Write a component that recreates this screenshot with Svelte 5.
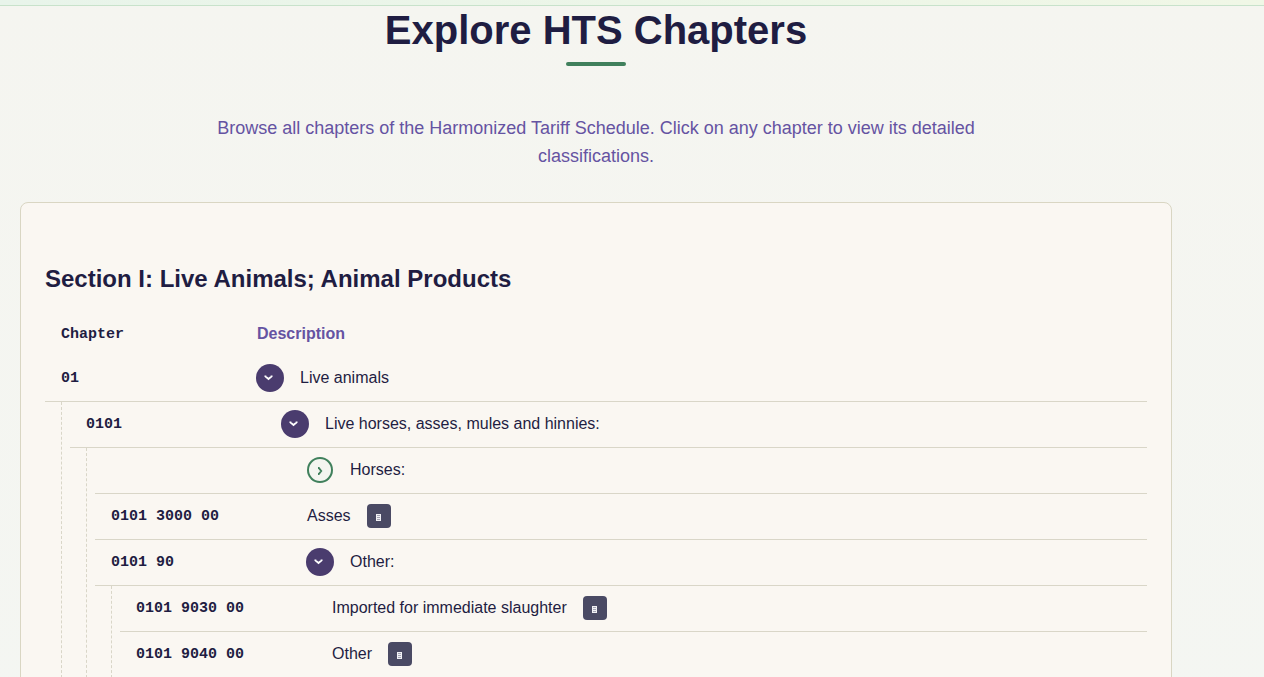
<script lang="ts">
  interface Entry {
    code: string;
    text: string;
    expandable?: boolean;
    open?: boolean;
    children?: Entry[];
  }

  let entries: Entry[] = $state([
    {
      code: "01",
      text: "Live animals",
      expandable: true,
      open: true,
      children: [
        {
          code: "0101",
          text: "Live horses, asses, mules and hinnies:",
          expandable: true,
          open: true,
          children: [
            { code: "", text: "Horses:", expandable: true, open: false },
            { code: "0101 3000 00", text: "Asses" },
            {
              code: "0101 90",
              text: "Other:",
              expandable: true,
              open: true,
              children: [
                { code: "0101 9030 00", text: "Imported for immediate slaughter" },
                { code: "0101 9040 00", text: "Other" },
              ],
            },
          ],
        },
      ],
    },
  ]);
</script>

{#snippet branch(items: Entry[])}
  <ul>
    {#each items as item}
      <li>
        <div class="row">
          <span class="code">{item.code}</span>
          <div class="description">
            {#if item.expandable}
              <button
                class="toggle"
                class:open={item.open}
                aria-expanded={item.open}
                aria-label="Toggle {item.text}"
                onclick={() => (item.open = !item.open)}
              >
                <svg width="26" height="26" viewBox="0 0 26 26" fill="none" stroke="currentColor">
                  {#if item.open}
                    <path d="M8.4 10.4 V11.4 L11.5 14 L14.6 11.4 V10.4" stroke-width="1.9" />
                  {:else}
                    <path d="M11 11 H11.8 L14.2 14 L11.8 17 H11" stroke-width="1.9" />
                  {/if}
                </svg>
              </button>
            {/if}
            <span>{item.text}</span>
            {#if !item.expandable}
              <button class="details" aria-label="Details for {item.code}">
                <svg width="24" height="24" viewBox="0 0 24 24">
                  <rect x="9" y="10" width="5" height="7" fill="#f1f1f5" />
                  <path d="M10 11.5h3M10 13.5h3M10 15.5h3" stroke="#a4a4b4" stroke-width="1" />
                </svg>
              </button>
            {/if}
          </div>
        </div>
        {#if item.open && item.children}
          {@render branch(item.children)}
        {/if}
      </li>
    {/each}
  </ul>
{/snippet}

<div class="page">
  <header></header>
  <main>
    <h1>Explore HTS Chapters</h1>
    <p class="intro">
      Browse all chapters of the Harmonized Tariff Schedule. Click on any chapter to view its
      detailed classifications.
    </p>

    <section class="card">
      <h2>Section I: Live Animals; Animal Products</h2>
      <div class="row head">
        <span class="code">Chapter</span>
        <span class="description">Description</span>
      </div>
      <div class="tree">
        {@render branch(entries)}
      </div>
    </section>
  </main>
</div>

<style>
  :global(body) {
    margin: 0;
  }

  .page {
    min-height: 100vh;
    background: linear-gradient(180deg, #f5f5f0 0%, #f4f6f2 100%);
    color: #1f1d42;
    font-family: "Liberation Sans", Arial, sans-serif;
    font-size: 16px;
  }

  header {
    height: 5px;
    background: linear-gradient(90deg, #e8f4ea, #f0f7e6);
    border-bottom: 1px solid #c8e2cb;
  }

  main {
    padding: 0 92px 0 20px;
  }

  h1 {
    margin: 0;
    padding-bottom: 8px;
    font-size: 40px;
    line-height: 48px;
    text-align: center;

    &::after {
      content: "";
      display: block;
      width: 60px;
      height: 4px;
      margin: 8px auto 0;
      border-radius: 2px;
      background: #40805c;
    }
  }

  .intro {
    max-width: 800px;
    margin: 40px auto 32px;
    color: #6553a2;
    font-size: 18px;
    line-height: 28px;
    text-align: center;
  }

  .card {
    padding: 60px 24px 32px;
    background: #faf7f2;
    border: 1px solid #d9d6c3;
    border-radius: 8px;
  }

  h2 {
    margin: 0 0 16px;
    font-size: 24px;
    line-height: 32px;
  }

  ul {
    margin: 0;
    padding: 0;
    list-style: none;
  }

  ul ul {
    margin-left: 16px;
    padding-left: 8px;
    border-left: 1px dashed #d9d6c8;
  }

  .row {
    display: flex;
    align-items: center;
    gap: 16px;
    padding: 9px 16px 10px;
    border-bottom: 1px solid #d9d6c8;
  }

  .head {
    padding: 10px 16px 9px;
    border-bottom: none;
    font-weight: bold;

    & .description {
      color: #6553a2;
    }
  }

  .code {
    flex: 0 0 180px;
    font-family: "Liberation Mono", "Courier New", monospace;
    font-size: 15px;
    font-weight: bold;
  }

  .description {
    display: flex;
    align-items: center;
    flex: 1;
    min-height: 26px;
    line-height: 22px;
  }

  .toggle {
    width: 26px;
    height: 26px;
    margin: 0 17px 0 0;
    padding: 0;
    border: none;
    border-radius: 50%;
    background: #f4f5f0;
    box-shadow: inset 0 0 0 2px #40805c;
    color: #40805c;
    cursor: pointer;

    &.open {
      background: #4a3c6e;
      box-shadow: 0 0 0 1px #4a3c6e;
      color: #fff;
    }
  }

  .details {
    width: 24px;
    height: 24px;
    margin: 0 0 0 16px;
    padding: 0;
    border: none;
    border-radius: 4px;
    background: #4a4a64;
    cursor: pointer;
  }

  svg {
    display: block;
  }
</style>
